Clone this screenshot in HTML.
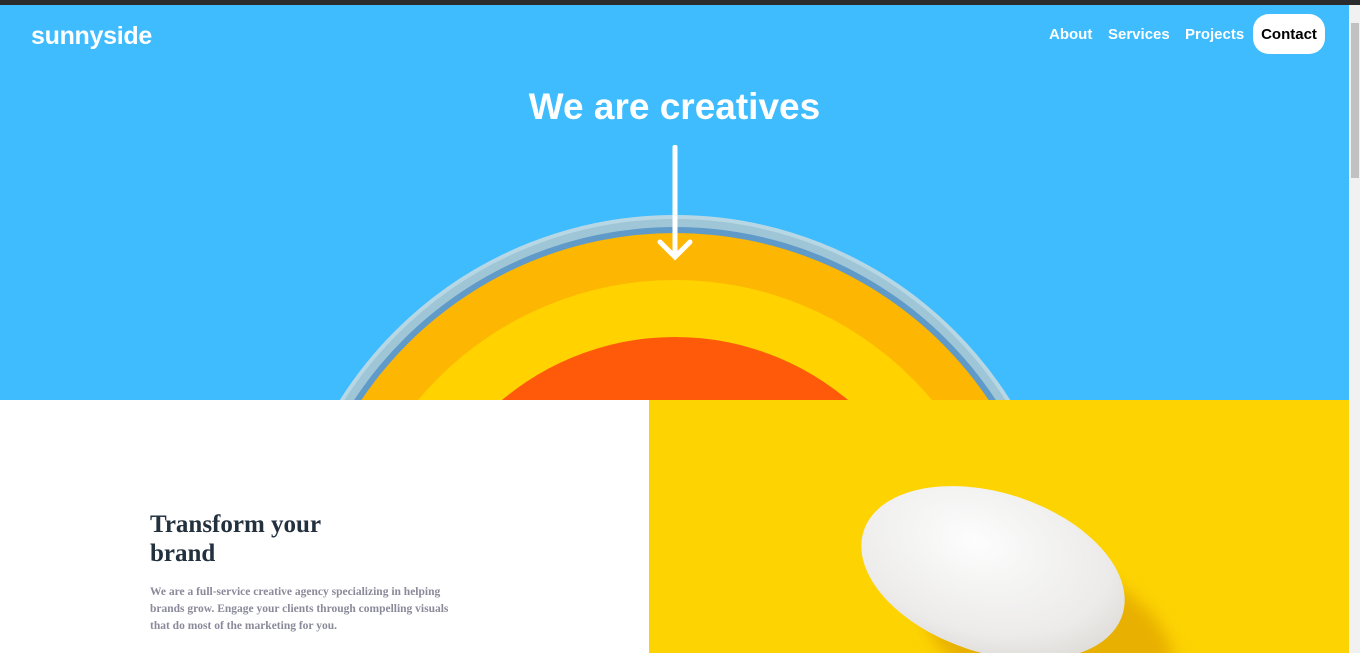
<!DOCTYPE html>
<html><head><style>
*{margin:0;padding:0;box-sizing:border-box}
html,body{width:1360px;height:653px;overflow:hidden}
body{background:#fff;position:relative;font-family:"Liberation Sans",sans-serif}
.top{position:absolute;left:0;top:0;width:1360px;height:5px;background:#2b2b2e}
.hero{position:absolute;left:0;top:5px;width:1349px;height:395px;background:#3ebcfe;overflow:hidden}
.sb{position:absolute;left:1349px;top:5px;width:11px;height:648px;background:#f1f1f1}
.sb div{position:absolute;left:2px;top:18px;width:8px;height:155px;background:#c1c1c1}
.logo{position:absolute;left:31px;top:17px;color:#fff;font-weight:bold;font-size:25px;letter-spacing:-0.3px}
.nav{position:absolute;top:21px;color:#fff;font-weight:bold;font-size:15px}
.btn{position:absolute;left:1253px;top:9px;width:72px;height:40px;background:#fff;border-radius:16px;color:#000;font-size:15px;font-weight:bold;text-align:center;line-height:41px}
h1{position:absolute;left:0;width:1349px;top:81px;text-align:center;color:#fff;font-size:37px;font-weight:bold}
.c{position:absolute;border-radius:50%}
.left{position:absolute;left:0;top:400px;width:649px;height:253px;background:#fff}
.right{position:absolute;left:649px;top:400px;width:700px;height:253px;background:#fdd302;overflow:hidden}
h2{position:absolute;left:150px;top:510px;font-family:"Liberation Serif",serif;font-size:25px;line-height:29px;color:#23303e;font-weight:bold}
p{position:absolute;left:150px;top:584px;width:320px;font-family:"Liberation Serif",serif;font-size:11.5px;line-height:17px;color:#8a8a9a;font-weight:bold}
</style></head><body>
<div class="top"></div>
<div class="hero">
 <div class="c" style="left:279px;top:210px;width:792px;height:792px;background:#9fc6d6;border:4px solid #b8d7e4"></div>
 <div class="c" style="left:291px;top:222px;width:768px;height:768px;background:#5f9ac8"></div>
 <div class="c" style="left:297px;top:228px;width:756px;height:756px;background:#fdb602"></div>
 <div class="c" style="left:340px;top:275px;width:670px;height:670px;background:#ffd200"></div>
 <div class="c" style="left:406px;top:332px;width:538px;height:538px;background:#ff5a0a"></div>
 <div class="logo">sunnyside</div>
 <div class="nav" style="left:1049px">About</div>
 <div class="nav" style="left:1108px">Services</div>
 <div class="nav" style="left:1185px">Projects</div>
 <div class="btn">Contact</div>
 <h1>We are creatives</h1>
 <svg style="position:absolute;left:655px;top:140px" width="40" height="120"><path d="M20 2V112M5 97L20 112L35 97" stroke="#fff" stroke-width="5" fill="none" stroke-linecap="round"/></svg>
</div>
<div class="sb"><div></div></div>
<div class="left"></div>
<div class="right">
 <div class="c" style="left:270px;top:160px;width:260px;height:150px;background:#e8b000;transform:rotate(20deg);filter:blur(8px)"></div>
 <div class="c" style="left:208px;top:93px;width:272px;height:160px;background:radial-gradient(ellipse at 40% 35%,#fdfdfd,#ecebea 60%,#cfcac0);transform:rotate(18deg)"></div>
</div>
<h2>Transform your<br>brand</h2>
<p>We are a full-service creative agency specializing in helping brands grow. Engage your clients through compelling visuals that do most of the marketing for you.</p>
</body></html>
